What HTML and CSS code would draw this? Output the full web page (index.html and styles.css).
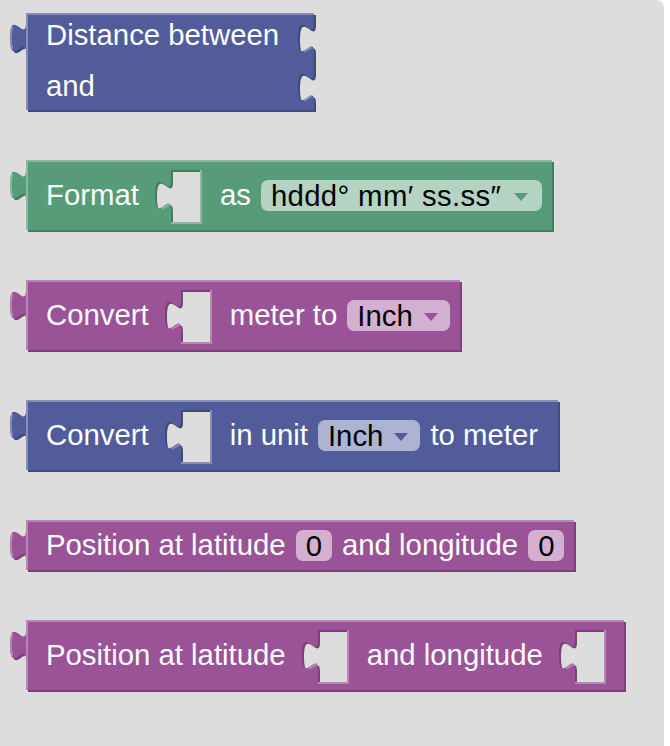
FILE: index.html
```html
<!DOCTYPE html>
<html lang="en">
<head>
<meta charset="utf-8">
<title>Geo blocks</title>
<link rel="stylesheet" href="styles.css">
</head>
<body>
<svg class="defs" width="0" height="0" aria-hidden="true">
  <defs>
    <clipPath id="hole-clip" clipPathUnits="userSpaceOnUse">
      <path d="M 22.5,0 H 8 V 5 C 8,15 0,-3 0,12.5 C 0,28 8,10 8,20 V 26 H 22.5 Z"/>
    </clipPath>
    <clipPath id="notch-clip" clipPathUnits="userSpaceOnUse">
      <path d="M 0,5 C 0,15 -8,-3 -8,12.5 C -8,28 0,10 0,20 Z M 0,4 H 1 V 22 H 0 Z"/>
    </clipPath>
  </defs>
</svg>
<main class="workspace">
  <div class="flyout">

    <div class="block block--blue block--external">
      <svg class="output-tab" viewBox="-9 4 9 18" aria-hidden="true">
        <path class="shade" transform="translate(1 1)" d="M 1,20 H 0 C 0,10 -8,28 -8,12.5 C -8,-3 0,15 0,5 H 1 Z"/>
        <path class="fill" d="M 1,20 H 0 C 0,10 -8,28 -8,12.5 C -8,-3 0,15 0,5 H 1 Z"/>
        <path class="glint" d="M -6.86,18 Q -8.38,12.5 -6.86,7"/>
      </svg>
      <div class="row row--first">
        <span class="label">Distance between</span>
        <svg class="notch" viewBox="-9 4 10 18" aria-hidden="true">
          <path class="shade" d="M 0,5 C 0,15 -8,-3 -8,12.5 C -8,28 0,10 0,20 Z M 0,4 H 1 V 22 H 0 Z"/>
          <g clip-path="url(#notch-clip)"><path class="hole" transform="translate(1 1)" d="M 0,5 C 0,15 -8,-3 -8,12.5 C -8,28 0,10 0,20 H 1 V 5 Z"/></g>
          <path class="glint" d="M -5,19.3 l 3.68,-2.1"/>
        </svg>
      </div>
      <div class="row row--second">
        <span class="label">and</span>
        <svg class="notch" viewBox="-9 4 10 18" aria-hidden="true">
          <path class="shade" d="M 0,5 C 0,15 -8,-3 -8,12.5 C -8,28 0,10 0,20 Z M 0,4 H 1 V 22 H 0 Z"/>
          <g clip-path="url(#notch-clip)"><path class="hole" transform="translate(1 1)" d="M 0,5 C 0,15 -8,-3 -8,12.5 C -8,28 0,10 0,20 H 1 V 5 Z"/></g>
          <path class="glint" d="M -5,19.3 l 3.68,-2.1"/>
        </svg>
      </div>
    </div>

    <div class="block block--green">
      <svg class="output-tab" viewBox="-9 4 9 18" aria-hidden="true">
        <path class="shade" transform="translate(1 1)" d="M 1,20 H 0 C 0,10 -8,28 -8,12.5 C -8,-3 0,15 0,5 H 1 Z"/>
        <path class="fill" d="M 1,20 H 0 C 0,10 -8,28 -8,12.5 C -8,-3 0,15 0,5 H 1 Z"/>
        <path class="glint" d="M -6.86,18 Q -8.38,12.5 -6.86,7"/>
      </svg>
      <div class="row">
        <span class="label">Format</span>
        <svg class="socket" viewBox="0 0 23.5 27" aria-hidden="true">
          <path class="shade" d="M 22.5,0 H 8 V 5 C 8,15 0,-3 0,12.5 C 0,28 8,10 8,20 V 26 H 22.5 Z"/>
          <g clip-path="url(#hole-clip)"><path class="hole" transform="translate(1 1)" d="M 22.5,0 H 8 V 5 C 8,15 0,-3 0,12.5 C 0,28 8,10 8,20 V 26 H 22.5 Z"/></g>
          <path class="glint" d="M 23,0 V 27 M 8,26.5 H 23.5 M 3.5,19.3 l 3.68,-2.1"/>
        </svg>
        <span class="label">as</span>
        <span class="field field--dropdown field--wide"><span class="field-text">hddd° mm′ ss.ss″</span><svg class="arrow" viewBox="0 0 14 8" aria-hidden="true"><path d="M 0,0 H 14 L 7,8 Z"/></svg></span>
      </div>
    </div>

    <div class="block block--purple">
      <svg class="output-tab" viewBox="-9 4 9 18" aria-hidden="true">
        <path class="shade" transform="translate(1 1)" d="M 1,20 H 0 C 0,10 -8,28 -8,12.5 C -8,-3 0,15 0,5 H 1 Z"/>
        <path class="fill" d="M 1,20 H 0 C 0,10 -8,28 -8,12.5 C -8,-3 0,15 0,5 H 1 Z"/>
        <path class="glint" d="M -6.86,18 Q -8.38,12.5 -6.86,7"/>
      </svg>
      <div class="row">
        <span class="label">Convert</span>
        <svg class="socket" viewBox="0 0 23.5 27" aria-hidden="true">
          <path class="shade" d="M 22.5,0 H 8 V 5 C 8,15 0,-3 0,12.5 C 0,28 8,10 8,20 V 26 H 22.5 Z"/>
          <g clip-path="url(#hole-clip)"><path class="hole" transform="translate(1 1)" d="M 22.5,0 H 8 V 5 C 8,15 0,-3 0,12.5 C 0,28 8,10 8,20 V 26 H 22.5 Z"/></g>
          <path class="glint" d="M 23,0 V 27 M 8,26.5 H 23.5 M 3.5,19.3 l 3.68,-2.1"/>
        </svg>
        <span class="label">meter to</span>
        <span class="field field--dropdown"><span class="field-text">Inch</span><svg class="arrow" viewBox="0 0 14 8" aria-hidden="true"><path d="M 0,0 H 14 L 7,8 Z"/></svg></span>
      </div>
    </div>

    <div class="block block--blue">
      <svg class="output-tab" viewBox="-9 4 9 18" aria-hidden="true">
        <path class="shade" transform="translate(1 1)" d="M 1,20 H 0 C 0,10 -8,28 -8,12.5 C -8,-3 0,15 0,5 H 1 Z"/>
        <path class="fill" d="M 1,20 H 0 C 0,10 -8,28 -8,12.5 C -8,-3 0,15 0,5 H 1 Z"/>
        <path class="glint" d="M -6.86,18 Q -8.38,12.5 -6.86,7"/>
      </svg>
      <div class="row">
        <span class="label">Convert</span>
        <svg class="socket" viewBox="0 0 23.5 27" aria-hidden="true">
          <path class="shade" d="M 22.5,0 H 8 V 5 C 8,15 0,-3 0,12.5 C 0,28 8,10 8,20 V 26 H 22.5 Z"/>
          <g clip-path="url(#hole-clip)"><path class="hole" transform="translate(1 1)" d="M 22.5,0 H 8 V 5 C 8,15 0,-3 0,12.5 C 0,28 8,10 8,20 V 26 H 22.5 Z"/></g>
          <path class="glint" d="M 23,0 V 27 M 8,26.5 H 23.5 M 3.5,19.3 l 3.68,-2.1"/>
        </svg>
        <span class="label">in unit</span>
        <span class="field field--dropdown"><span class="field-text">Inch</span><svg class="arrow" viewBox="0 0 14 8" aria-hidden="true"><path d="M 0,0 H 14 L 7,8 Z"/></svg></span>
        <span class="label">to meter</span>
      </div>
    </div>

    <div class="block block--purple">
      <svg class="output-tab" viewBox="-9 4 9 18" aria-hidden="true">
        <path class="shade" transform="translate(1 1)" d="M 1,20 H 0 C 0,10 -8,28 -8,12.5 C -8,-3 0,15 0,5 H 1 Z"/>
        <path class="fill" d="M 1,20 H 0 C 0,10 -8,28 -8,12.5 C -8,-3 0,15 0,5 H 1 Z"/>
        <path class="glint" d="M -6.86,18 Q -8.38,12.5 -6.86,7"/>
      </svg>
      <div class="row">
        <span class="label">Position at latitude</span>
        <span class="field field--number">0</span>
        <span class="label">and longitude</span>
        <span class="field field--number">0</span>
      </div>
    </div>

    <div class="block block--purple">
      <svg class="output-tab" viewBox="-9 4 9 18" aria-hidden="true">
        <path class="shade" transform="translate(1 1)" d="M 1,20 H 0 C 0,10 -8,28 -8,12.5 C -8,-3 0,15 0,5 H 1 Z"/>
        <path class="fill" d="M 1,20 H 0 C 0,10 -8,28 -8,12.5 C -8,-3 0,15 0,5 H 1 Z"/>
        <path class="glint" d="M -6.86,18 Q -8.38,12.5 -6.86,7"/>
      </svg>
      <div class="row">
        <span class="label">Position at latitude</span>
        <svg class="socket" viewBox="0 0 23.5 27" aria-hidden="true">
          <path class="shade" d="M 22.5,0 H 8 V 5 C 8,15 0,-3 0,12.5 C 0,28 8,10 8,20 V 26 H 22.5 Z"/>
          <g clip-path="url(#hole-clip)"><path class="hole" transform="translate(1 1)" d="M 22.5,0 H 8 V 5 C 8,15 0,-3 0,12.5 C 0,28 8,10 8,20 V 26 H 22.5 Z"/></g>
          <path class="glint" d="M 23,0 V 27 M 8,26.5 H 23.5 M 3.5,19.3 l 3.68,-2.1"/>
        </svg>
        <span class="label">and longitude</span>
        <svg class="socket" viewBox="0 0 23.5 27" aria-hidden="true">
          <path class="shade" d="M 22.5,0 H 8 V 5 C 8,15 0,-3 0,12.5 C 0,28 8,10 8,20 V 26 H 22.5 Z"/>
          <g clip-path="url(#hole-clip)"><path class="hole" transform="translate(1 1)" d="M 22.5,0 H 8 V 5 C 8,15 0,-3 0,12.5 C 0,28 8,10 8,20 V 26 H 22.5 Z"/></g>
          <path class="glint" d="M 23,0 V 27 M 8,26.5 H 23.5 M 3.5,19.3 l 3.68,-2.1"/>
        </svg>
      </div>
    </div>

  </div>
</main>
</body>
</html>
```

FILE: styles.css
```css
html, body {
  margin: 0;
  padding: 0;
  background: #ffffff;
}

body {
  font-family: "Liberation Sans", Arial, Helvetica, sans-serif;
  width: 670px;
  height: 746px;
  overflow: hidden;
}

.defs {
  position: absolute;
  width: 0;
  height: 0;
  overflow: hidden;
}

.workspace {
  display: block;
  width: 664px;
  height: 746px;
  background: #dddddd;
  border-top-right-radius: 8px;
  --ground: #dddddd;
}

.flyout {
  display: flex;
  flex-direction: column;
  align-items: flex-start;
  gap: 50px;
  padding: 13px 0 0 26px;
}

/* colour themes */
.block--blue {
  --main: #525c9a;
  --light: #868db8;
  --dark: #424a7b;
  --field: #aeb3d4;
}
.block--green {
  --main: #579b79;
  --light: #89b9a1;
  --dark: #467c61;
  --field: #b4d3c3;
}
.block--purple {
  --main: #9a5397;
  --light: #b886b6;
  --dark: #7b4279;
  --field: #d3b0d0;
}

.block {
  position: relative;
  display: flex;
  flex-direction: column;
  background: var(--main);
  box-shadow: inset 2px 2px 0 var(--light), 2px 2px 0 var(--dark);
  color: #ffffff;
}

.row {
  position: relative;
  display: flex;
  align-items: center;
  gap: 10px;
  box-sizing: border-box;
  min-height: 50px;
  padding: 8px 10px 8px 20px;
}

.block--external .row {
  height: 48.5px;
  min-height: 0;
  padding: 0 35px 0 20px;
}
.block--external .row--first {
  padding-bottom: 4px;
}

.label {
  font-size: 29.33px;
  line-height: 34px;
  white-space: nowrap;
}
.label:last-child {
  margin-right: 10px;
}

/* output connector on the left */
.output-tab {
  position: absolute;
  left: -18px;
  top: 8px;
  width: 18px;
  height: 36px;
}

/* external input notch on the right edge */
.notch {
  position: absolute;
  right: -2px;
  top: 8px;
  width: 20px;
  height: 36px;
}

/* empty inline value input */
.socket {
  flex: none;
  width: 47px;
  height: 54px;
  margin: 2px 8px -2px 6px;
}

.shade { fill: var(--dark); }
.fill { fill: var(--main); }
.hole { fill: var(--ground); }
.glint {
  fill: none;
  stroke: var(--light);
  stroke-width: 1;
}

/* editable fields */
.field {
  display: inline-flex;
  align-items: center;
  box-sizing: border-box;
  height: 31px;
  border-radius: 7px;
  background: var(--field);
  color: #000000;
  font-size: 29.33px;
  line-height: 31px;
  white-space: nowrap;
}
.field--dropdown {
  gap: 11px;
  padding: 0 12px 0 10px;
}
.field--wide .field-text {
  letter-spacing: 0.35px;
}
.field--wide {
  gap: 13px;
  padding-right: 14px;
}
.field--number {
  padding: 0 10px;
}
.arrow {
  width: 14px;
  height: 8px;
  margin-top: 3px;
  fill: var(--main);
}
```
